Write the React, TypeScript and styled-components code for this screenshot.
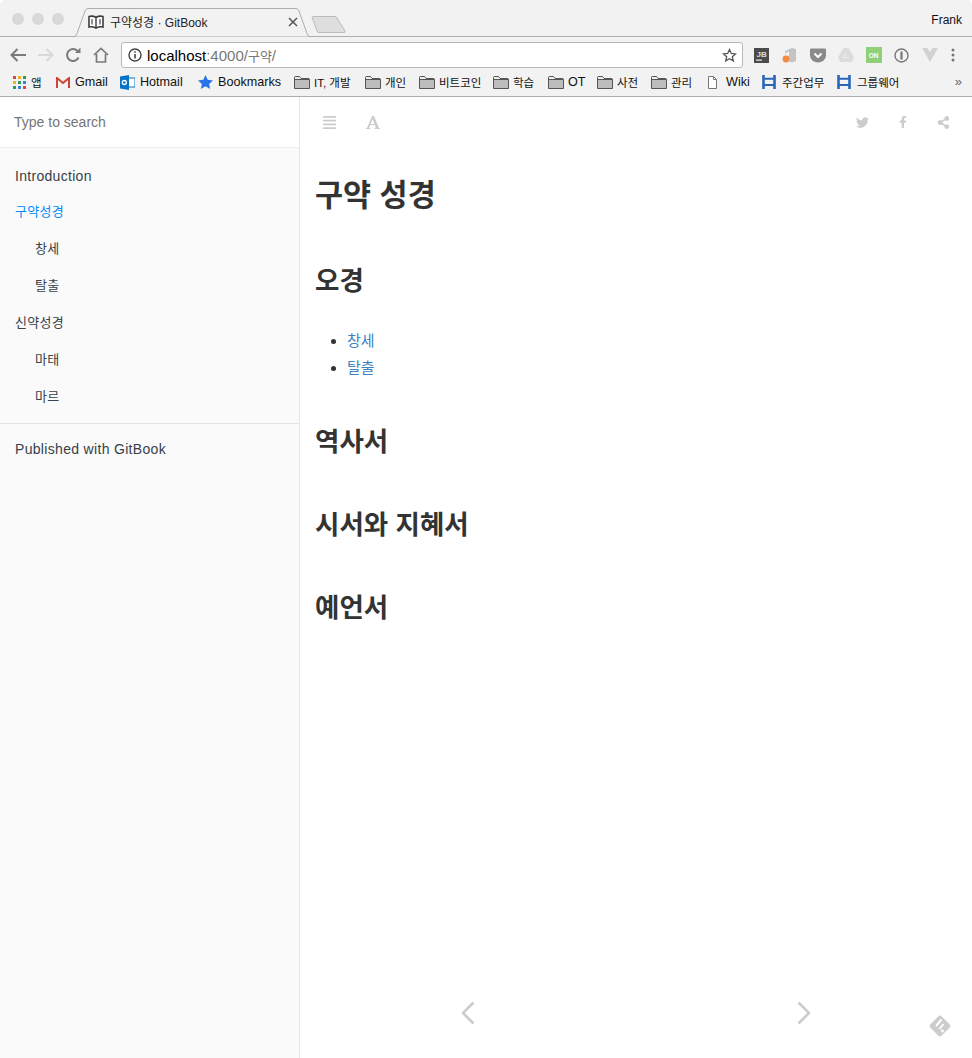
import React, { FC } from "react";
import styled, { createGlobalStyle } from "styled-components";
import { FaAlignJustify, FaFacebookF, FaShareAlt, FaTwitter } from "react-icons/fa";

const SANS = `"Liberation Sans", "Noto Sans CJK KR", sans-serif`;

const GlobalStyle = createGlobalStyle`
  html, body { margin: 0; padding: 0; background: #fff; }
  body { font-family: ${SANS}; color: #333; }
  * { box-sizing: border-box; }
`;

const Page = styled.div`
  width: 972px;
  height: 1058px;
  display: flex;
  flex-direction: column;
  overflow: hidden;
`;

// Browser chrome
const TabStrip = styled.div`
  height: 37px;
  flex: none;
  display: flex;
  background: #f2f2f2;
  border-bottom: 1px solid #adadad;
  border-radius: 5px 5px 0 0;
  padding: 8px 10px 0 12px;
`;

const Lights = styled.div`
  display: flex;
  gap: 8px;
  padding-top: 5px;
  width: 60px;
`;

const Light = styled.span`
  width: 12px;
  height: 12px;
  border-radius: 50%;
  background: #d8d8d8;
`;

const Tab = styled.div`
  position: relative;
  width: 241px;
  height: 29px;
  display: flex;
  align-items: center;
  padding: 0 15px 2px 16px;
  font-size: 12px;
  color: #222;
`;

const TabShape = styled.svg`
  position: absolute;
  left: 0;
  top: 0;
`;

const TabIcon = styled.svg`
  position: relative;
  margin-right: 6px;
`;

const TabTitle = styled.span`
  position: relative;
  flex: 1;
`;

const TabClose = styled.svg`
  position: relative;
`;

const NewTab = styled.svg`
  margin: 8px 0 0 -2px;
`;

const UserName = styled.span`
  margin-left: auto;
  font-size: 12px;
  color: #111;
  padding-top: 5px;
`;

const Toolbar = styled.div`
  height: 33px;
  flex: none;
  display: flex;
  align-items: center;
  padding: 3px 0 0 9px;
  background: #f2f2f2;
`;

const NavButton = styled.svg<{ $mr: number }>`
  flex: none;
  margin-right: ${(p) => p.$mr}px;
`;

const AddressBar = styled.div`
  width: 622px;
  height: 26px;
  display: flex;
  align-items: center;
  background: #fff;
  border: 1px solid #b8b8b8;
  border-radius: 3px;
  padding: 0 5px 0 6px;
  font-size: 15px;
`;

const Host = styled.span`
  color: #000;
  margin-left: 5px;
`;

const UrlRest = styled.span`
  color: #777;
  flex: 1;
`;

const UrlHangul = styled.span`
  font-size: 13px;
`;

const Extensions = styled.div`
  display: flex;
  align-items: center;
  margin-left: 11px;
  gap: 12px;
`;

const ExtIcon = styled.svg<{ $ml?: number }>`
  margin-left: ${(p) => p.$ml ?? 0}px;
`;

const Bookmarks = styled.div`
  height: 27px;
  flex: none;
  display: flex;
  align-items: center;
  padding: 0 0 2px 13px;
  background: #f2f2f2;
  border-bottom: 1px solid #adadad;
  color: #111;
  position: relative;
`;

const Bookmark = styled.div<{ $w: number; $latin?: boolean; $gap?: number }>`
  width: ${(p) => p.$w}px;
  flex: none;
  display: flex;
  align-items: center;
  gap: ${(p) => p.$gap ?? 5}px;
  font-size: ${(p) => (p.$latin ? 12.6 : 11.5)}px;
  white-space: nowrap;
`;

const More = styled.span`
  position: absolute;
  right: 10px;
  top: 4px;
  font-size: 13px;
  color: #666;
`;

// GitBook page
const Book = styled.div`
  flex: 1;
  display: flex;
  min-height: 0;
`;

const Sidebar = styled.aside`
  width: 300px;
  flex: none;
  background: #fafafa;
  border-right: 1px solid #e6e6e6;
`;

const Search = styled.div`
  height: 51px;
  padding: 0 14px;
  display: flex;
  align-items: center;
  background: #fff;
  border-bottom: 1px solid #ececec;
  font-size: 14px;
  color: #757575;
`;

const Summary = styled.ul`
  list-style: none;
  margin: 0;
  padding: 7px 0 9px;
  border-bottom: 1px solid #e4e4e4;
`;

const SummaryItem = styled.li<{ $nested?: boolean; $active?: boolean; $latin?: boolean }>`
  height: 37px;
  display: flex;
  align-items: center;
  padding-left: ${(p) => (p.$nested ? 35 : 15)}px;
  padding-top: ${(p) => (p.$latin ? 4 : 0)}px;
  font-size: ${(p) => (p.$latin ? 14 : 13)}px;
  letter-spacing: 0.3px;
  color: ${(p) => (p.$active ? "#008cff" : "#364149")};
`;

const Published = styled.div`
  padding: 7px 15px;
  height: 37px;
  margin-top: 7px;
  font-size: 14px;
  letter-spacing: 0.32px;
  line-height: 22px;
  color: #364149;
`;

const Main = styled.main`
  flex: 1;
  position: relative;
  background: #fff;
`;

const BookHeader = styled.header`
  height: 50px;
  display: flex;
  align-items: center;
  justify-content: space-between;
  padding: 0 22px;
  color: #ccc;
`;

const HeaderGroup = styled.div<{ $gap: number }>`
  display: flex;
  align-items: center;
  gap: ${(p) => p.$gap}px;
`;

const Content = styled.div`
  padding: 0 15px;
  color: #333;
`;

const Title = styled.h1`
  margin: 29px 0 0;
  padding-bottom: 2px;
  font-size: 30.5px;
  line-height: 38px;
  font-weight: 700;
`;

const Section = styled.h2`
  margin: 47px 0 0;
  font-size: 26.5px;
  line-height: 36px;
  font-weight: 700;
`;

const LinkList = styled.ul`
  margin: 28px 0 -4px;
  padding-left: 32px;
  font-size: 15px;
  line-height: 27px;
`;

const LinkItem = styled.li`
  color: #333;
  a {
    color: #4183c4;
    text-decoration: none;
  }
`;

const PageArrow = styled.svg<{ $left: number }>`
  position: absolute;
  top: 904px;
  left: ${(p) => p.$left}px;
`;

const GitbookMark = styled.svg`
  position: absolute;
  right: 20px;
  bottom: 20px;
`;

const Folder: FC = () => (
  <svg width="16" height="13" viewBox="0 0 16 13">
    <path d="M.5 12.5V1.5q0-1 1-1h4l1.500 2h7.500q1 0 1 1v9z" fill="#bdbdbd" stroke="#555" />
    <path d="M.5 3.5h15" stroke="#555" />
    <path d="M1 1.2h4.600l1.300 1.800H1z" fill="#f4f4f4" />
  </svg>
);

const HBar: FC = () => (
  <svg width="14" height="14" viewBox="0 0 14 14">
    <path d="M1.500 0v14M12.500 0v14" stroke="#2a66b5" strokeWidth="2.600" />
    <path d="M2 3.800h10M2 10h10" stroke="#2a66b5" strokeWidth="2" />
  </svg>
);

const App: FC = () => (
  <Page>
    <GlobalStyle />
    <TabStrip>
      <Lights>
        <Light />
        <Light />
        <Light />
      </Lights>
      <Tab>
        <TabShape width="241" height="29" viewBox="0 0 241 29">
          <path d="M0 28.500h2q2 0 3-3L13 3q1-2.500 3-2.500h208q2 0 3 2.500l8 22.500q1 3 3 3" fill="#f2f2f2" stroke="#adadad" />
        </TabShape>
        <TabIcon width="16" height="14" viewBox="0 0 16 14">
          <path d="M1 1.500q3.500-1 7 .8q3.500-1.800 7-.8v10.500q-3.500-.8-7 1q-3.500-1.800-7-1z" fill="#fff" stroke="#3c3c3c" strokeWidth="1.600" />
          <path d="M8 2v10.500" stroke="#3c3c3c" strokeWidth="1.400" />
          <path d="M4 4v5.500M12 4v5.500" stroke="#777" strokeWidth="1.600" />
        </TabIcon>
        <TabTitle>구약성경 · GitBook</TabTitle>
        <TabClose width="10" height="10" viewBox="0 0 10 10">
          <path d="M1 1l8 8M9 1l-8 8" stroke="#555" strokeWidth="1.500" />
        </TabClose>
      </Tab>
      <NewTab width="36" height="17" viewBox="0 0 36 17">
        <path d="M1 1q0-.5 1-.5h22q1.500 0 2 1.500l8 13q.5 1.500-1 1.500H8q-1.500 0-2-1.500z" fill="#dedede" stroke="#bbb" />
      </NewTab>
      <UserName>Frank</UserName>
    </TabStrip>
    <Toolbar>
      <NavButton $mr={10} width="18" height="16" viewBox="0 0 18 16">
        <path d="M17 8H3M8.500 2L2.500 8l6 6" fill="none" stroke="#7a7a7a" strokeWidth="2" />
      </NavButton>
      <NavButton $mr={10} width="18" height="16" viewBox="0 0 18 16">
        <path d="M1 8h14M9.500 2l6 6-6 6" fill="none" stroke="#d9d9d9" strokeWidth="2" />
      </NavButton>
      <NavButton $mr={12} width="16" height="16" viewBox="0 0 16 16">
        <path d="M13.500 10.500A6 6 0 1 1 12.500 4" fill="none" stroke="#7a7a7a" strokeWidth="2" />
        <path d="M10 6h5.500V.5z" fill="#7a7a7a" />
      </NavButton>
      <NavButton $mr={12} width="16" height="16" viewBox="0 0 16 16">
        <path d="M1 8l7-6.500L15 8M3.500 7v8h9V7" fill="none" stroke="#7a7a7a" strokeWidth="1.700" />
      </NavButton>
      <AddressBar>
        <svg width="14" height="14" viewBox="0 0 14 14">
          <circle cx="7" cy="7" r="6" fill="none" stroke="#444" strokeWidth="1.400" />
          <path d="M7 6v4.500M7 3.200v1.500" stroke="#444" strokeWidth="1.600" />
        </svg>
        <Host>localhost</Host>
        <UrlRest>:4000/<UrlHangul>구약</UrlHangul>/</UrlRest>
        <svg width="15" height="15" viewBox="0 0 15 15">
          <path d="M7.500 1.500l1.800 4 4.200.4-3.200 2.800 1 4.200-3.800-2.200-3.800 2.200 1-4.200L1.500 5.900l4.200-.4z" fill="none" stroke="#555" strokeWidth="1.300" />
        </svg>
      </AddressBar>
      <Extensions>
        <ExtIcon width="15" height="15" viewBox="0 0 15 15">
          <rect width="15" height="15" fill="#4b4b4b" />
          <rect x="2" y="11.500" width="6" height="1.300" fill="#ddd" />
          <text x="2.500" y="8.500" fontSize="8" fontWeight="700" fill="#ddd" fontFamily="Liberation Sans">JB</text>
        </ExtIcon>
        <ExtIcon $ml={1} width="15" height="16" viewBox="0 0 15 16">
          <path d="M3 4l7-3 4 1v12l-4 1.500-3-1V4.500L4 6v3z" fill="#c4c4c4" />
          <circle cx="4" cy="12" r="3.400" fill="#f58a42" />
        </ExtIcon>
        <ExtIcon $ml={1} width="16" height="15" viewBox="0 0 16 15">
          <path d="M0 1.500q0-1 1-1h14q1 0 1 1v6a8 7 0 0 1-16 0z" fill="#8a8a8a" />
          <path d="M4.500 5.500L8 9l3.500-3.500" fill="none" stroke="#fff" strokeWidth="2" />
        </ExtIcon>
        <ExtIcon width="16" height="14" viewBox="0 0 16 14">
          <path d="M5.500 0h5l5.500 9.500-2.500 4.500h-11L0 9.500z" fill="#dcdcdc" />
          <path d="M5.500 9.500h5M8 4.500L5 9.500" stroke="#efefef" />
        </ExtIcon>
        <ExtIcon width="16" height="16" viewBox="0 0 16 16">
          <rect width="16" height="16" fill="#8fd078" />
          <text x="2.700" y="10.500" fontSize="6.500" fontWeight="700" fill="#fff" fontFamily="Liberation Sans">ON</text>
        </ExtIcon>
        <ExtIcon width="15" height="15" viewBox="0 0 15 15">
          <circle cx="7.500" cy="7.500" r="6.500" fill="none" stroke="#777" strokeWidth="1.400" />
          <path d="M7.500 3.500v8" stroke="#777" strokeWidth="2.200" />
        </ExtIcon>
        <ExtIcon $ml={1} width="16" height="14" viewBox="0 0 16 14">
          <path d="M0 0h5.500L8 4l2.500-4H16L8 14z" fill="#d2d2d2" />
        </ExtIcon>
        <ExtIcon $ml={1} width="4" height="14" viewBox="0 0 4 14">
          <circle cx="2" cy="2" r="1.500" fill="#777" />
          <circle cx="2" cy="7" r="1.500" fill="#777" />
          <circle cx="2" cy="12" r="1.500" fill="#777" />
        </ExtIcon>
      </Extensions>
    </Toolbar>
    <Bookmarks>
      <Bookmark $w={43}>
        <svg width="13" height="13" viewBox="0 0 13 13">
          {[0, 5, 10].map((y, r) =>
            [0, 5, 10].map((x, c) => (
              <rect key={`${r}${c}`} x={x} y={y} width="3" height="3" fill={["#e2453c", "#f2b01e", "#2a9d4e", "#3b7de0"][(r + c) % 4]} />
            ))
          )}
        </svg>
        앱
      </Bookmark>
      <Bookmark $w={64} $latin>
        <svg width="14" height="11" viewBox="0 0 14 11">
          <path d="M1 11V1l6 5 6-5v10" fill="none" stroke="#cf4436" strokeWidth="2" />
        </svg>
        Gmail
      </Bookmark>
      <Bookmark $w={78} $latin>
        <svg width="15" height="15" viewBox="0 0 15 15">
          <rect x="5" y="3" width="10" height="9" fill="#fff" stroke="#0a72c4" />
          <path d="M0 1.500L9 0v15L0 13.500z" fill="#0a72c4" />
          <circle cx="4.300" cy="7.500" r="2" fill="none" stroke="#fff" strokeWidth="1.300" />
        </svg>
        Hotmail
      </Bookmark>
      <Bookmark $w={96} $latin>
        <svg width="15" height="14" viewBox="0 0 15 14">
          <path d="M7.500 0l2.200 4.800 5.300.6-3.900 3.500 1.100 5.100-4.700-2.700-4.700 2.700 1.100-5.100L0 5.400l5.300-.6z" fill="#2a72e8" />
        </svg>
        Bookmarks
      </Bookmark>
      <Bookmark $w={71} $gap={4}><Folder />IT, 개발</Bookmark>
      <Bookmark $w={54} $gap={4}><Folder />개인</Bookmark>
      <Bookmark $w={74} $gap={4}><Folder />비트코인</Bookmark>
      <Bookmark $w={55} $gap={4}><Folder />학습</Bookmark>
      <Bookmark $w={49} $gap={4} $latin><Folder />OT</Bookmark>
      <Bookmark $w={54} $gap={4}><Folder />사전</Bookmark>
      <Bookmark $w={56} $gap={4}><Folder />관리</Bookmark>
      <Bookmark $w={55} $gap={8} $latin>
        <svg width="11" height="13" viewBox="0 0 11 13">
          <path d="M1.500.5h5l3 3v9h-8zM6.500.5v3h3" fill="#fff" stroke="#777" />
        </svg>
        Wiki
      </Bookmark>
      <Bookmark $w={75} $gap={6}><HBar />주간업무</Bookmark>
      <Bookmark $w={70} $gap={6}><HBar />그룹웨어</Bookmark>
      <More>»</More>
    </Bookmarks>
    <Book>
      <Sidebar>
        <Search>Type to search</Search>
        <Summary>
          <SummaryItem $latin>Introduction</SummaryItem>
          <SummaryItem $active>구약성경</SummaryItem>
          <SummaryItem $nested>창세</SummaryItem>
          <SummaryItem $nested>탈출</SummaryItem>
          <SummaryItem>신약성경</SummaryItem>
          <SummaryItem $nested>마태</SummaryItem>
          <SummaryItem $nested>마르</SummaryItem>
        </Summary>
        <Published>Published with GitBook</Published>
      </Sidebar>
      <Main>
        <BookHeader>
          <HeaderGroup $gap={29}>
            <FaAlignJustify size={15} />
            <svg width="14" height="14" viewBox="0 0 14 14" fill="currentColor">
              <path
                fillRule="evenodd"
                d="M0 14v-1h1L6 1h2l5 12h1v1H8.500v-1h1.300L8.800 10H4.200L3.200 13h1.300v1zM4.600 9h3.800L6.500 4z"
              />
            </svg>
          </HeaderGroup>
          <HeaderGroup $gap={28}>
            <FaTwitter size={13} />
            <FaFacebookF size={12} />
            <FaShareAlt size={13} />
          </HeaderGroup>
        </BookHeader>
        <Content>
          <Title>구약 성경</Title>
          <Section>오경</Section>
          <LinkList>
            <LinkItem><a>창세</a></LinkItem>
            <LinkItem><a>탈출</a></LinkItem>
          </LinkList>
          <Section>역사서</Section>
          <Section>시서와 지혜서</Section>
          <Section>예언서</Section>
        </Content>
        <PageArrow $left={161} width="14" height="24" viewBox="0 0 14 24">
          <path d="M12.500 1.500L2 12l10.500 10.500" fill="none" stroke="#ccc" strokeWidth="2.600" />
        </PageArrow>
        <PageArrow $left={497} width="14" height="24" viewBox="0 0 14 24">
          <path d="M1.500 1.500L12 12 1.500 22.500" fill="none" stroke="#ccc" strokeWidth="2.600" />
        </PageArrow>
        <GitbookMark width="24" height="24" viewBox="0 0 24 24">
          <rect x="4" y="4" width="16" height="16" rx="2.500" fill="#ccc" transform="rotate(45 12 12)" />
          <path d="M13.500 5.500L8 12M15.500 10L11.500 15" stroke="#fff" strokeWidth="2" />
          <circle cx="14.500" cy="17" r="1.400" fill="#fff" />
        </GitbookMark>
      </Main>
    </Book>
  </Page>
);

export default App;
